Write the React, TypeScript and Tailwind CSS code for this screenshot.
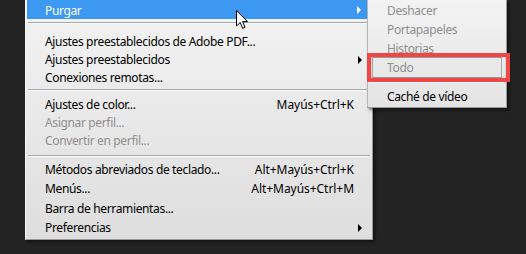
import React from "react";

const font = { fontFamily: '"Noto Sans", "Open Sans", sans-serif' };

function Arrow({ white = false }: { white?: boolean }) {
  return (
    <svg width="5" height="8" viewBox="0 0 5 8" className="absolute right-[9px] top-1/2 -translate-y-1/2">
      <path d="M0 0 L4 4 L0 8 Z" fill={white ? "#ffffff" : "#000000"} />
    </svg>
  );
}

type RowProps = {
  label: string;
  shortcut?: string;
  disabled?: boolean;
  arrow?: boolean;
  h: string;
};

function Row({ label, shortcut, disabled, arrow, h }: RowProps) {
  return (
    <div className={`relative flex items-center pl-[19px] pr-[18px] ${h} ${disabled ? "text-[#8f8f8f]" : "text-black"}`}>
      <span className="flex-1 whitespace-nowrap">{label}</span>
      {shortcut && <span className="whitespace-nowrap tracking-[-0.05px]">{shortcut}</span>}
      {arrow && <Arrow />}
    </div>
  );
}

function Sep({ h, mt }: { h: string; mt: string }) {
  return (
    <div className={`${h} flex flex-col`}>
      <div className={`${mt} mx-[2px] h-px bg-[#a8a8a8]`} />
      <div className="mx-[2px] h-px bg-[#fafafa]" />
    </div>
  );
}

export default function App() {
  return (
    <div
      className="relative w-[526px] h-[254px] overflow-hidden bg-[#232323] text-[12px] leading-[18px] tracking-[-0.35px]"
      style={font}
    >
      {/* Main menu */}
      <div className="absolute left-[25px] top-0 w-[348px] h-[240px] bg-gradient-to-b from-[#f3f3f3] to-[#dedede] border-l border-[#f8f8f8] border-r border-r-[#9a9a9a] border-b border-b-[#9a9a9a] shadow-[2px_2px_3px_rgba(0,0,0,0.5)] flex flex-col">
        <div className="relative mx-[1px] h-[19px] bg-[#3c98f0] text-white pl-[18px]">
          <span className="relative top-[2px]">Purgar</span>
          <Arrow white />
        </div>
        <Sep h="h-[14px]" mt="mt-[3px]" />
        <Row h="h-[18px]" label="Ajustes preestablecidos de Adobe PDF..." />
        <Row h="h-[18px]" label="Ajustes preestablecidos" arrow />
        <Row h="h-[18px]" label="Conexiones remotas..." />
        <Sep h="h-[9px]" mt="mt-[2px]" />
        <Row h="h-[18px]" label="Ajustes de color..." shortcut="Mayús+Ctrl+K" />
        <Row h="h-[18px]" label="Asignar perfil..." disabled />
        <Row h="h-[18px]" label="Convertir en perfil..." disabled />
        <Sep h="h-[10px]" mt="mt-[5px]" />
        <Row h="h-[19.5px]" label="Métodos abreviados de teclado..." shortcut="Alt+Mayús+Ctrl+K" />
        <Row h="h-[19.5px]" label="Menús..." shortcut="Alt+Mayús+Ctrl+M" />
        <Row h="h-[19.5px]" label="Barra de herramientas..." />
        <Row h="h-[19.5px]" label="Preferencias" arrow />
      </div>

      {/* Cursor */}
      <svg
        className="absolute left-[236px] top-[10px]"
        width="13"
        height="20"
        viewBox="0 0 13 20"
      >
        <path
          d="M0.5 0.5 L0.5 16 L4.2 12.5 L6.6 18.3 L9 17.3 L6.6 11.6 L11.5 11.6 Z"
          fill="#ffffff"
          stroke="#000000"
          strokeWidth="1"
          strokeLinejoin="miter"
        />
      </svg>

      {/* Submenu */}
      <div className="absolute left-[367px] top-0 w-[140px] h-[108px] bg-gradient-to-b from-[#f3f3f3] to-[#e4e4e4] border-l border-[#b8b8b8] border-r border-r-[#9a9a9a] border-b border-b-[#9a9a9a] shadow-[2px_2px_3px_rgba(0,0,0,0.5)] flex flex-col pt-[1px]">
        <div className="h-[19px] flex items-center pl-[19px] text-[#8f8f8f]">Deshacer</div>
        <div className="h-[19px] flex items-center pl-[19px] text-[#8f8f8f]">Portapapeles</div>
        <div className="h-[19px] flex items-center pl-[19px] text-[#8f8f8f]">Historias</div>
        <div className="relative h-[19px] flex items-center pl-[19px] text-[#8f8f8f]">
          <div className="absolute left-[4px] right-[4px] top-[-1px] bottom-[-1px] border border-[#a5a5a5] bg-[#e9e9e9]" />
          <span className="relative">Todo</span>
        </div>
        <Sep h="h-[10px]" mt="mt-[4px]" />
        <div className="h-[19px] flex items-center pl-[19px] text-black">Caché de vídeo</div>
      </div>

      {/* Red highlight box */}
      <div className="absolute left-[367px] top-[53px] w-[143px] h-[29px] border-[4px] border-[#f04646] shadow-[inset_0_0_2px_rgba(0,0,0,0.25)]" />
    </div>
  );
}
